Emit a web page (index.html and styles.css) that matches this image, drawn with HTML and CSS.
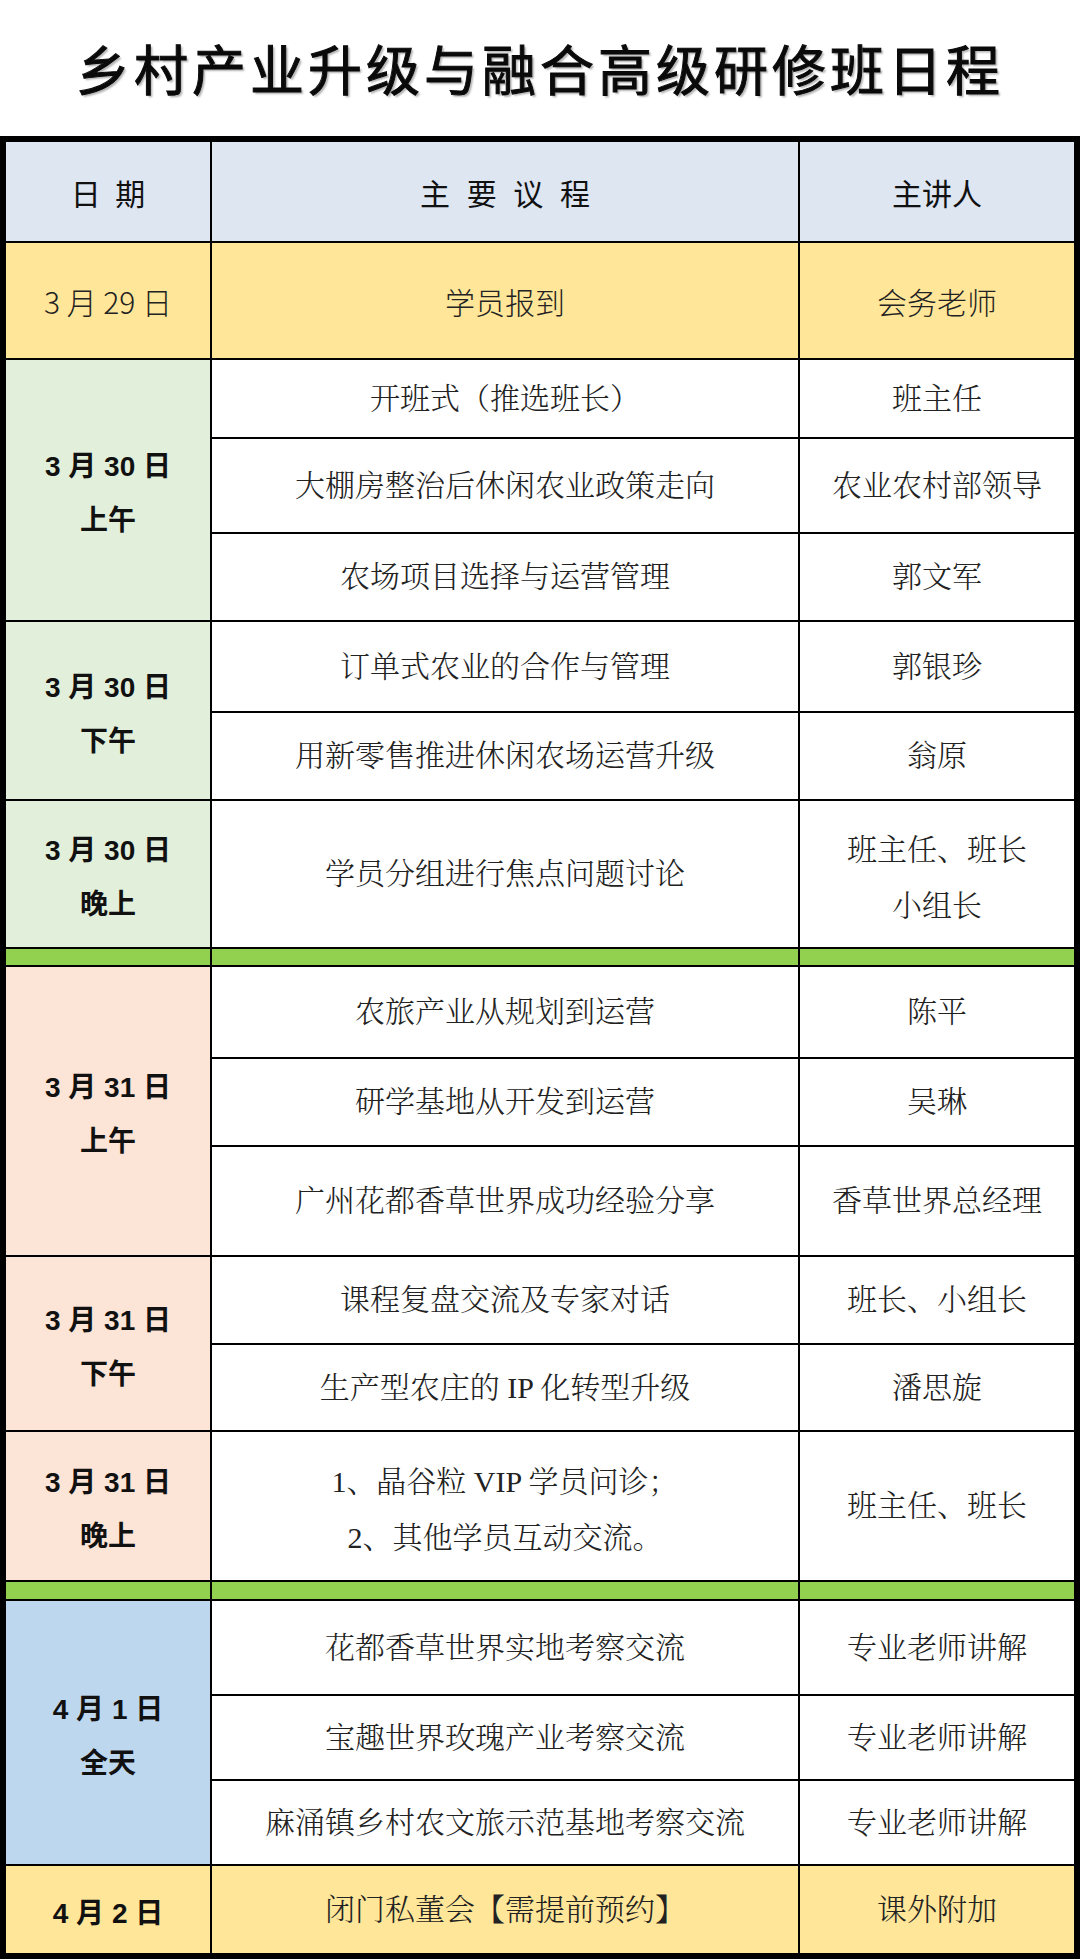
FILE: index.html
```html
<!DOCTYPE html>
<html lang="zh-CN">
<head>
<meta charset="utf-8">
<title>乡村产业升级与融合高级研修班日程</title>
<link rel="stylesheet" href="styles.css">
</head>
<body>
<header class="title-bar">
  <h1 class="title">乡村产业升级与融合高级研修班日程</h1>
</header>
<div class="schedule">
  <div class="cell head">日&nbsp;期</div>
  <div class="cell head head-wide">主&nbsp;要&nbsp;议&nbsp;程</div>
  <div class="cell head">主讲人</div>

  <div class="cell plain gold">3&nbsp;月&nbsp;29&nbsp;日</div>
  <div class="cell plain gold">学员报到</div>
  <div class="cell plain gold">会务老师</div>

  <div class="cell date green span-3">3 月 30 日<br>上午</div>
  <div class="cell song">开班式（推选班长）</div>
  <div class="cell song">班主任</div>
  <div class="cell song">大棚房整治后休闲农业政策走向</div>
  <div class="cell song">农业农村部领导</div>
  <div class="cell song">农场项目选择与运营管理</div>
  <div class="cell song">郭文军</div>

  <div class="cell date green span-2">3 月 30 日<br>下午</div>
  <div class="cell song">订单式农业的合作与管理</div>
  <div class="cell song">郭银珍</div>
  <div class="cell song">用新零售推进休闲农场运营升级</div>
  <div class="cell song">翁原</div>

  <div class="cell date green">3 月 30 日<br>晚上</div>
  <div class="cell song">学员分组进行焦点问题讨论</div>
  <div class="cell song multi">班主任、班长<br>小组长</div>

  <div class="cell band"></div>
  <div class="cell band"></div>
  <div class="cell band"></div>

  <div class="cell date pink span-3">3 月 31 日<br>上午</div>
  <div class="cell song">农旅产业从规划到运营</div>
  <div class="cell song">陈平</div>
  <div class="cell song">研学基地从开发到运营</div>
  <div class="cell song">吴琳</div>
  <div class="cell song">广州花都香草世界成功经验分享</div>
  <div class="cell song">香草世界总经理</div>

  <div class="cell date pink span-2">3 月 31 日<br>下午</div>
  <div class="cell song">课程复盘交流及专家对话</div>
  <div class="cell song">班长、小组长</div>
  <div class="cell song">生产型农庄的 IP 化转型升级</div>
  <div class="cell song">潘思旋</div>

  <div class="cell date pink">3 月 31 日<br>晚上</div>
  <div class="cell song multi">1、晶谷粒 VIP 学员问诊；<br>2、其他学员互动交流。</div>
  <div class="cell song">班主任、班长</div>

  <div class="cell band"></div>
  <div class="cell band"></div>
  <div class="cell band"></div>

  <div class="cell date blue span-3">4 月 1 日<br>全天</div>
  <div class="cell song">花都香草世界实地考察交流</div>
  <div class="cell song">专业老师讲解</div>
  <div class="cell song">宝趣世界玫瑰产业考察交流</div>
  <div class="cell song">专业老师讲解</div>
  <div class="cell song">麻涌镇乡村农文旅示范基地考察交流</div>
  <div class="cell song">专业老师讲解</div>

  <div class="cell date gold">4 月 2 日</div>
  <div class="cell song gold">闭门私董会【需提前预约】</div>
  <div class="cell song gold">课外附加</div>
</div>
</body>
</html>
```

FILE: styles.css
```css
* {
  box-sizing: border-box;
}

html,
body {
  margin: 0;
  padding: 0;
  background: #ffffff;
}

body {
  width: 1080px;
  font-family: "Noto Sans CJK SC", sans-serif;
  color: #111111;
}

.title-bar {
  height: 136px;
  display: flex;
  align-items: center;
  justify-content: center;
}

.title {
  margin: 0;
  font-family: "Noto Sans CJK SC", sans-serif;
  font-weight: 400;
  font-size: 54px;
  letter-spacing: 4px;
  line-height: 1;
  color: #0a0a0a;
  -webkit-text-stroke: 1px #0a0a0a;
  text-shadow: 2px 2px 2px rgba(0, 0, 0, 0.3);
}

.schedule {
  display: grid;
  grid-template-columns: 204px 586px 274px;
  grid-template-rows:
    99px 115px
    77px 93px 86px
    89px 86px
    146px
    16px
    90px 86px 108px
    86px 85px
    148px
    17px
    93px 83px 83px
    87px;
  gap: 2px;
  width: 1080px;
  border: 6px solid #000000;
  background: #000000;
}

.cell {
  display: flex;
  align-items: center;
  justify-content: center;
  text-align: center;
  background: #ffffff;
  font-size: 30px;
  line-height: 1.2;
}

.head {
  background: #dde6f1;
  font-family: "Noto Sans CJK SC", sans-serif;
  font-weight: 400;
  font-size: 30px;
  color: #111111;
  word-spacing: 8px;
}

.head-wide {
  word-spacing: 10px;
}

.plain {
  font-family: "Noto Sans CJK SC", sans-serif;
  font-weight: 300;
  color: #222222;
}

.song {
  font-family: "Liberation Serif", "Noto Serif CJK SC", "Noto Sans CJK SC", serif;
  font-weight: 300;
  color: #222222;
}

.multi {
  line-height: 56px;
  padding-top: 8px;
}

.date {
  font-family: "Liberation Sans", "Noto Sans CJK SC", sans-serif;
  font-weight: 700;
  font-size: 28px;
  line-height: 54px;
  color: #111111;
  padding-top: 8px;
}

.span-2 {
  grid-row: span 2;
}

.span-3 {
  grid-row: span 3;
}

.gold {
  background: #ffe699;
}

.green {
  background: #e2efda;
}

.pink {
  background: #fce4d6;
}

.blue {
  background: #bdd7ee;
}

.band {
  background: #92d050;
}
```
